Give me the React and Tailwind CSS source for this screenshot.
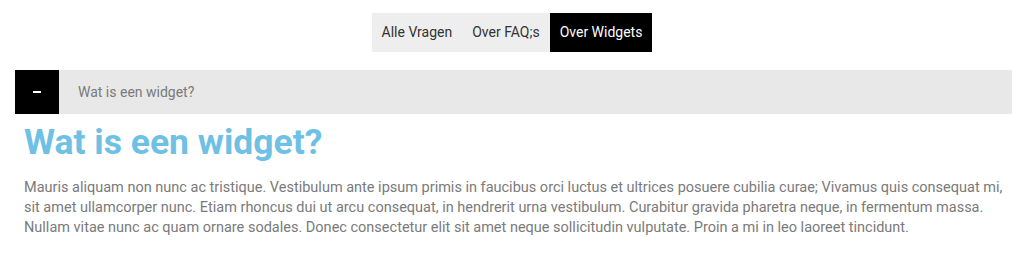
export default function App() {
    const tabs = ['Alle Vragen', 'Over FAQ;s', 'Over Widgets'];
    const active = 2;

    return (
        <div className="w-[1024px] h-[273px] bg-white font-['Roboto',sans-serif] overflow-hidden">
            {/* tabs */}
            <div className="flex justify-center pt-[13px]">
                <div className="flex bg-[#eeeeee]">
                    {tabs.map((tab, i) => (
                        <button
                            key={tab}
                            className={
                                i === active
                                    ? 'h-[39px] px-[10px] text-[14px] bg-black text-white'
                                    : 'h-[39px] px-[10px] text-[14px] text-[#333333]'
                            }
                        >
                            {tab}
                        </button>
                    ))}
                </div>
            </div>

            {/* accordion */}
            <div className="mt-[18px] ml-[15px] mr-[12px] flex items-center h-[44px] bg-[#e8e8e8]">
                <div className="w-[44px] h-[44px] bg-black flex items-center justify-center">
                    <span className="block w-[8px] h-[2px] bg-white"></span>
                </div>
                <span className="ml-[19px] text-[14px] text-[#7a7a7a]">Wat is een widget?</span>
            </div>

            <div className="pl-[24px] pr-[4px]">
                <h2 className="mt-[6px] text-[35.5px] leading-[44px] font-bold text-[#6ec1e4]">Wat is een widget?</h2>
                <p className="mt-[14px] text-[14.5px] leading-[20px] text-[#7a7a7a]">
                    Mauris aliquam non nunc ac tristique. Vestibulum ante ipsum primis in faucibus orci luctus et ultrices posuere cubilia curae; Vivamus quis consequat mi, sit amet ullamcorper nunc. Etiam rhoncus dui ut arcu consequat, in hendrerit urna vestibulum. Curabitur gravida pharetra neque, in fermentum massa. Nullam vitae nunc ac quam ornare sodales. Donec consectetur elit sit amet neque sollicitudin vulputate. Proin a mi in leo laoreet tincidunt.
                </p>
            </div>
        </div>
    );
}
